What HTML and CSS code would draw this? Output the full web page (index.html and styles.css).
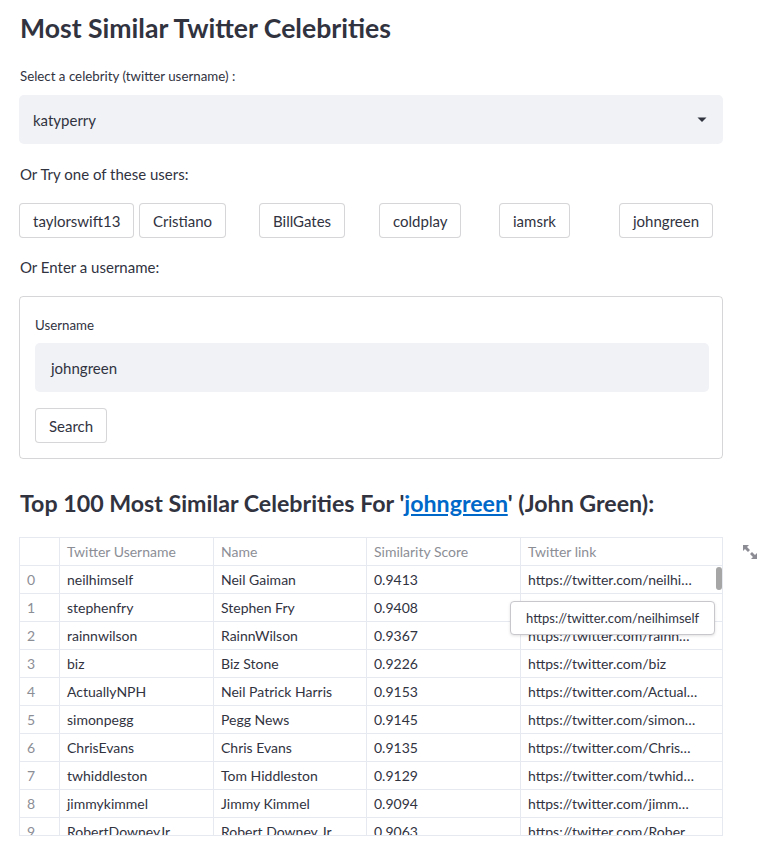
FILE: index.html
```html
<!DOCTYPE html>
<html>
<head>
<meta charset="utf-8">
<link rel="stylesheet" href="styles.css">
</head>
<body>
<main class="main">
  <h1 class="title">Most Similar Twitter Celebrities</h1>
  <div class="label sel-label">Select a celebrity (twitter username) :</div>
  <div class="select">
    <span>katyperry</span>
    <svg class="caret" width="10" height="6" viewBox="0 0 10 6"><path d="M0.5 0.5h9L5 5z" fill="#31333f"/></svg>
  </div>
  <p class="para try">Or Try one of these users:</p>
  <div class="cols">
    <div class="col"><button class="btn">taylorswift13</button></div>
    <div class="col"><button class="btn">Cristiano</button></div>
    <div class="col"><button class="btn">BillGates</button></div>
    <div class="col"><button class="btn">coldplay</button></div>
    <div class="col"><button class="btn">iamsrk</button></div>
    <div class="col"><button class="btn">johngreen</button></div>
  </div>
  <p class="para enter">Or Enter a username:</p>
  <div class="form">
    <div class="label">Username</div>
    <div class="input">johngreen</div>
    <button class="btn search">Search</button>
  </div>
  <h3 class="subtitle">Top 100 Most Similar Celebrities For '<a href="#" class="link">johngreen</a>' (John Green):</h3>
  <div class="table-wrap">
    <div class="table">
      <div class="row head">
        <div class="c idx"></div><div class="c u">Twitter Username</div><div class="c n">Name</div><div class="c s">Similarity Score</div><div class="c l">Twitter link</div>
      </div>
      <div class="row"><div class="c idx">0</div><div class="c u">neilhimself</div><div class="c n">Neil Gaiman</div><div class="c s">0.9413</div><div class="c l">https://twitter.com/neilhi…</div></div>
      <div class="row"><div class="c idx">1</div><div class="c u">stephenfry</div><div class="c n">Stephen Fry</div><div class="c s">0.9408</div><div class="c l">https://twitter.com/steph…</div></div>
      <div class="row"><div class="c idx">2</div><div class="c u">rainnwilson</div><div class="c n">RainnWilson</div><div class="c s">0.9367</div><div class="c l">https://twitter.com/rainn…</div></div>
      <div class="row"><div class="c idx">3</div><div class="c u">biz</div><div class="c n">Biz Stone</div><div class="c s">0.9226</div><div class="c l">https://twitter.com/biz</div></div>
      <div class="row"><div class="c idx">4</div><div class="c u">ActuallyNPH</div><div class="c n">Neil Patrick Harris</div><div class="c s">0.9153</div><div class="c l">https://twitter.com/Actual…</div></div>
      <div class="row"><div class="c idx">5</div><div class="c u">simonpegg</div><div class="c n">Pegg News</div><div class="c s">0.9145</div><div class="c l">https://twitter.com/simon…</div></div>
      <div class="row"><div class="c idx">6</div><div class="c u">ChrisEvans</div><div class="c n">Chris Evans</div><div class="c s">0.9135</div><div class="c l">https://twitter.com/Chris…</div></div>
      <div class="row"><div class="c idx">7</div><div class="c u">twhiddleston</div><div class="c n">Tom Hiddleston</div><div class="c s">0.9129</div><div class="c l">https://twitter.com/twhid…</div></div>
      <div class="row"><div class="c idx">8</div><div class="c u">jimmykimmel</div><div class="c n">Jimmy Kimmel</div><div class="c s">0.9094</div><div class="c l">https://twitter.com/jimm…</div></div>
      <div class="row"><div class="c idx">9</div><div class="c u">RobertDowneyJr</div><div class="c n">Robert Downey Jr</div><div class="c s">0.9063</div><div class="c l">https://twitter.com/Rober…</div></div>
    </div>
    <div class="thumb"></div>
    <div class="tooltip">https://twitter.com/neilhimself</div>
    <svg class="expand" width="16" height="16" viewBox="0 0 16 16">
      <path d="M1 1h6L5 3l3 3-2 2-3-3-2 2z" fill="#8c8c94"/>
      <path d="M15 15H9l2-2-3-3 2-2 3 3 2-2z" fill="#8c8c94"/>
    </svg>
  </div>
</main>
</body>
</html>
```

FILE: styles.css
```css
* { box-sizing: border-box; }
body {
  margin: 0;
  background: #fff;
  color: #31333f;
  font-family: Lato, "Open Sans", sans-serif;
}
.main {
  width: 704px;
  margin-left: 19px;
  padding-top: 12px;
}
.title {
  margin: 0;
  font-size: 26.6px;
  line-height: 32px;
  font-weight: 700;
  padding-left: 1px;
}
.label {
  font-size: 13.3px;
  line-height: 18px;
}
.sel-label {
  margin-top: 23px;
  padding-left: 1px;
}
.select {
  margin-top: 10px;
  height: 49px;
  background: #f0f2f6;
  border-radius: 5px;
  display: flex;
  align-items: center;
  justify-content: space-between;
  padding: 0 16px 0 14px;
  font-size: 15px;
}
.caret { margin-top: 1px; }
.para {
  margin: 0;
  font-size: 15px;
  line-height: 20px;
  padding-left: 1px;
}
.try { margin-top: 20px; }
.cols {
  margin-top: 19px;
  display: grid;
  grid-template-columns: repeat(6, minmax(0, 1fr));
  gap: 16px;
}
.btn {
  font-family: inherit;
  font-size: 15px;
  color: #31333f;
  background: #fff;
  border: 1px solid rgba(49, 51, 63, 0.2);
  border-radius: 4px;
  height: 35px;
  padding: 0 13px;
  white-space: nowrap;
  cursor: pointer;
}
.enter { margin-top: 19px; }
.form {
  margin-top: 19px;
  border: 1px solid rgba(49, 51, 63, 0.2);
  border-radius: 4px;
  padding: 19px 13px 15px 15px;
  display: flex;
  flex-direction: column;
  align-items: flex-start;
}
.input {
  margin-top: 9px;
  width: 100%;
  height: 49px;
  background: #f0f2f6;
  border-radius: 5px;
  display: flex;
  align-items: center;
  padding-left: 16px;
  font-size: 15px;
}
.search { margin-top: 16px; }
.subtitle {
  margin: 30px 0 0 0;
  font-size: 23.2px;
  line-height: 28px;
  font-weight: 700;
  padding-left: 1px;
}
.link { color: #0068c9; }
.table-wrap {
  position: relative;
  margin-top: 20px;
}
.table {
  height: 299px;
  overflow: hidden;
  border: 1px solid #e6e9ef;
  border-right: none;
  font-size: 14px;
}
.row {
  display: flex;
  height: 28px;
  border-bottom: 1px solid #e6e9ef;
}
.c {
  border-right: 1px solid #e6e9ef;
  padding: 0 7px;
  display: flex;
  align-items: center;
  white-space: nowrap;
  overflow: hidden;
}
.idx { width: 40px; color: #8c8e96; }
.u { width: 154px; }
.n { width: 153px; }
.s { width: 154px; }
.l { width: 202px; }
.head .c { color: #8c8e96; }
.thumb {
  position: absolute;
  left: 697px;
  top: 30px;
  width: 6px;
  height: 23px;
  border-radius: 3px;
  background: #a6a6a6;
}
.tooltip {
  position: absolute;
  left: 491px;
  top: 64px;
  width: 205px;
  height: 34px;
  background: #fff;
  border: 1px solid #c8c8cc;
  border-radius: 4px;
  box-shadow: 0 1px 3px rgba(0, 0, 0, 0.12);
  font-size: 13px;
  display: flex;
  align-items: center;
  justify-content: center;
}
.expand {
  position: absolute;
  left: 723px;
  top: 7px;
}
```
